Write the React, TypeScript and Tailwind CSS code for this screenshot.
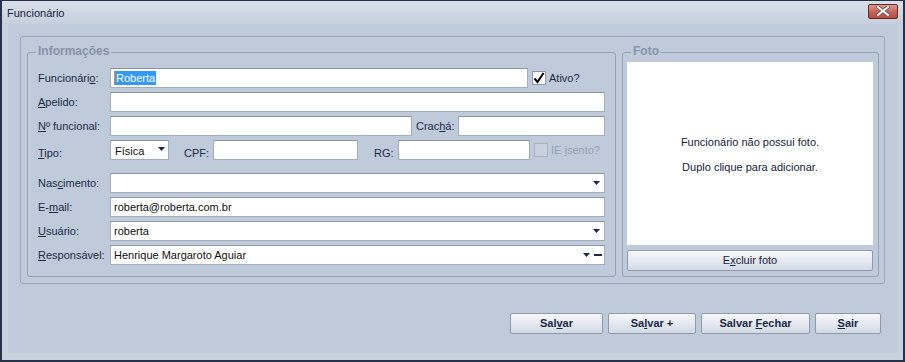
import type { ReactNode } from "react";

const LABEL = "text-[11px] leading-none text-[#1b2a47]";
const INPUT =
  "h-[20px] bg-white border border-[#a3acba] border-t-[#8a95a8] flex items-center px-[3px] text-[11px] text-[#111] overflow-hidden whitespace-nowrap";

const Arrow = () => (
  <svg width="7" height="4" viewBox="0 0 7 4" className="shrink-0">
    <polygon points="0,0 7,0 3.5,4" fill="#1b2a47" />
  </svg>
);

const Check = ({ checked, disabled }: { checked?: boolean; disabled?: boolean }) => (
  <div
    className={
      disabled
        ? "w-[14px] h-[14px] shrink-0 border border-[#aab3c1] bg-[#c9d1dd]"
        : "w-[14px] h-[14px] shrink-0 border border-[#8c97a9] bg-white flex items-center justify-center"
    }
  >
    {checked && (
      <svg width="12" height="12" viewBox="0 0 12 12">
        <path d="M1.5 6.5 L4.5 10 L10.5 1" stroke="#000" strokeWidth="2" fill="none" />
      </svg>
    )}
  </div>
);

const Label = ({ children }: { children: ReactNode }) => (
  <span className={`w-[72px] shrink-0 ${LABEL}`}>{children}</span>
);

const GroupBox = ({
  title,
  className,
  children,
}: {
  title: string;
  className: string;
  children: ReactNode;
}) => (
  <div className={`relative border border-[#97a3b6] rounded-[3px] ${className}`}>
    <span className="absolute -top-[9px] left-[8px] bg-[#bfcadb] px-[2px] text-[12px] leading-[14px] font-bold text-[#8794aa]">
      {title}
    </span>
    {children}
  </div>
);

const Button = ({ children, w }: { children: ReactNode; w: string }) => (
  <button
    className={`${w} h-[21px] rounded-[2px] border border-[#8f9aad] bg-gradient-to-b from-[#f7f8fb] to-[#d3dae5] text-[11px] font-bold text-[#1b2a47] text-center`}
  >
    <span>{children}</span>
  </button>
);

export default function App() {
  return (
    <div className="w-[905px] h-[362px] border-2 border-t border-[#26314a] bg-[#c8d1de] flex flex-col font-['Liberation_Sans',Arial,sans-serif]">
      {/* title bar */}
      <div className="h-[23px] shrink-0 flex items-center justify-between pl-[5px] pr-[5px] bg-gradient-to-b from-[#d9e0ea] to-[#c6cfdd]">
        <span className="text-[11px] text-[#15223d] pt-[2px]">Funcionário</span>
        <div className="w-[30px] h-[15px] -mt-[3px] rounded-[2px] border border-[#6d2626] bg-gradient-to-b from-[#dc9a8e] via-[#c8665a] to-[#b44c42] flex items-center justify-center">
          <svg width="14" height="10" viewBox="0 0 14 10">
            <path d="M2 1 L12 9 M12 1 L2 9" stroke="#6a5656" strokeWidth="3.6" strokeLinecap="square" />
            <path d="M2 1 L12 9 M12 1 L2 9" stroke="#f4f4f4" strokeWidth="2" strokeLinecap="square" />
          </svg>
        </div>
      </div>

      {/* body */}
      <div className="mx-[6px] h-[329px] bg-[#bfcadb] px-[12px] pt-[12px] flex flex-col">
        <div className="h-[248px] border border-[#9ba6b8] rounded-[3px] pt-[15px] pl-[6px] pr-[5px] pb-[6px] flex gap-[6px]">
          <GroupBox title="Informações" className="w-[589px] h-[225px] pt-[15px] px-[10px] pb-[11px] flex flex-col">
            <div className="flex flex-col gap-[4px]">
              <div className="flex items-center h-[20px]">
                <Label>
                  Funcionári<u>o</u>:
                </Label>
                <div className={`${INPUT} w-[418px]`}>
                  <span className="border-l border-[#e08a2a] bg-[#3399ff] text-white px-[1px] leading-[14px]">Roberta</span>
                </div>
                <div className="ml-[4px] flex items-center gap-[3px]">
                  <Check checked />
                  <span className={LABEL}>Ativo?</span>
                </div>
              </div>
              <div className="flex items-center h-[20px]">
                <Label>
                  <u>A</u>pelido:
                </Label>
                <div className={`${INPUT} flex-1`} />
              </div>
              <div className="flex items-center h-[20px]">
                <Label>
                  <u>N</u>º funcional:
                </Label>
                <div className={`${INPUT} w-[302px]`} />
                <span className={`w-[46px] pl-[4px] ${LABEL}`}>
                  Crac<u>h</u>á:
                </span>
                <div className={`${INPUT} flex-1`} />
              </div>
              <div className="flex items-end h-[20px]">
                <span className={`w-[72px] shrink-0 pb-[1px] ${LABEL}`}>
                  <u>T</u>ipo:
                </span>
                <div className={`${INPUT} w-[59px] items-start pt-[2px] pl-[4px] pr-[3px] justify-between`}>
                  <span>Física</span>
                  <span className="pt-[4px]">
                    <Arrow />
                  </span>
                </div>
                <span className={`w-[44px] pl-[15px] pb-[1px] ${LABEL}`}>CPF:</span>
                <div className={`${INPUT} w-[145px]`} />
                <span className={`w-[40px] pl-[16px] pb-[1px] ${LABEL}`}>RG:</span>
                <div className={`${INPUT} w-[132px]`} />
                <div className="ml-[4px] self-center flex items-center gap-[3px]">
                  <Check disabled />
                  <span className="text-[11px] leading-none text-[#97a2b3]">
                    IE <u>i</u>sento?
                  </span>
                </div>
              </div>
            </div>

            <div className="mt-[13px] flex flex-col gap-[4px]">
              <div className="flex items-center h-[20px]">
                <Label>
                  Nas<u>c</u>imento:
                </Label>
                <div className={`${INPUT} flex-1 justify-end pr-[4px]`}>
                  <Arrow />
                </div>
              </div>
              <div className="flex items-center h-[20px]">
                <Label>
                  E-<u>m</u>ail:
                </Label>
                <div className={`${INPUT} flex-1`}>roberta@roberta.com.br</div>
              </div>
              <div className="flex items-center h-[20px]">
                <Label>
                  <u>U</u>suário:
                </Label>
                <div className={`${INPUT} flex-1 justify-between pr-[4px]`}>
                  <span>roberta</span>
                  <Arrow />
                </div>
              </div>
              <div className="flex items-center h-[20px]">
                <Label>
                  <u>R</u>esponsável:
                </Label>
                <div className={`${INPUT} flex-1 justify-between pr-[2px]`}>
                  <span>Henrique Margaroto Aguiar</span>
                  <div className="flex items-center gap-[4px]">
                    <Arrow />
                    <div className="w-[8px] h-[2px] bg-[#1b2a47]" />
                  </div>
                </div>
              </div>
            </div>
          </GroupBox>

          <GroupBox title="Foto" className="w-[257px] h-[225px] pt-[9px] pl-[4px] pr-[5px] pb-[5px] flex flex-col gap-[5px]">
            <div className="flex-1 bg-white flex flex-col items-center justify-center gap-[14px] text-[11px] text-[#15223d] leading-none pt-[3px]">
              <span>Funcionário não possui foto.</span>
              <span>Duplo clique para adicionar.</span>
            </div>
            <button className="h-[21px] shrink-0 rounded-[2px] border border-[#8f9aad] bg-gradient-to-b from-[#f7f8fb] to-[#d3dae5] text-[11px] text-[#15223d]">
              E<u>x</u>cluir foto
            </button>
          </GroupBox>
        </div>

        <div className="mt-[29px] flex justify-end gap-[5px] pr-[4px]">
          <Button w="w-[93px]">
            Sal<u>v</u>ar
          </Button>
          <Button w="w-[88px]">
            Sa<u>l</u>var +
          </Button>
          <Button w="w-[109px]">
            Salvar <u>F</u>echar
          </Button>
          <Button w="w-[66px]">
            <u>S</u>air
          </Button>
        </div>
      </div>
    </div>
  );
}
